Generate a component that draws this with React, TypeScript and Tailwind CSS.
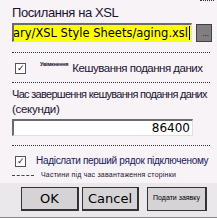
export default function App() {
  const label = { fontFamily: '"Liberation Sans", Arial, sans-serif' };
  const mono = { fontFamily: '"DejaVu Sans", Verdana, sans-serif' };
  return (
    <div className="w-[217px] h-[218px] overflow-hidden bg-[#f7f3f7] text-[#1c1230] relative whitespace-nowrap" style={label}>
      <div className="ml-[200px] w-[14px] border-t border-dotted border-[#333]" />
      <div className="pl-[12px] pr-[5px] pt-[4px]">
        <div className="text-[13px] leading-[16px] tracking-[-0.4px]">Посилання на XSL</div>
        <div className="flex items-center gap-[4px] mt-[2px]">
          <div className="w-[181px] h-[19px] bg-[#ffff00] border-t-2 border-l-2 border-[#6b6b6b] border-b border-r border-b-[#e0e0e0] border-r-[#e0e0e0] overflow-hidden flex justify-end items-center">
            <span className="text-[11.5px] leading-[15px] text-black" style={mono}>
              Library/XSL Style Sheets/aging.xsl
            </span>
            <span className="w-px h-[14px] bg-black shrink-0 mr-[1px] ml-[1px]" />
          </div>
          <div className="w-[16px] h-[18px] bg-[#7f7f7f] border border-[#404040] flex items-end justify-end pr-[2px] pb-[3px]">
            <span className="text-[8px] leading-none text-black">...</span>
          </div>
        </div>
        <div className="mt-[10px] border-t border-dotted border-[#333] w-[198px]" />
        <div className="flex items-center mt-[9px] h-[12px]">
          <div className="w-[11px] h-[11px] ml-[3px] border border-[#555] bg-white flex items-center justify-center text-[9px] leading-none">✓</div>
          <span className="ml-[14px] -mt-[7px] text-[5.5px] leading-none font-bold tracking-[-0.3px]">Увімкнення</span>
          <span className="ml-[4px] text-[11.5px] leading-[14px] tracking-[-0.5px]">Кешування подання даних</span>
        </div>
        <div className="mt-[8px] border-t border-dotted border-[#333] w-[198px]" />
        <div className="mt-[3px] text-[11px] leading-[16px] tracking-[-0.7px]">Час завершення кешування подання даних</div>
        <div className="text-[11.5px] leading-[15px] tracking-[-0.3px]">(секунди)</div>
        <div className="mt-[2px] w-[181px] h-[17px] bg-white border-t-2 border-l-2 border-[#6b6b6b] border-b border-r border-b-[#e0e0e0] border-r-[#e0e0e0] flex items-center justify-end pr-[2px]">
          <span className="text-[12px] leading-[14px] text-black" style={mono}>86400</span>
        </div>
        <div className="mt-[9px] border-t border-dotted border-[#333] w-[198px]" />
        <div className="flex items-center mt-[9px] h-[12px]">
          <div className="w-[11px] h-[11px] ml-[3px] border border-[#555] bg-white flex items-center justify-center text-[9px] leading-none">✓</div>
          <span className="ml-[10px] text-[10px] leading-[14px] tracking-[-0.3px] text-[#15205a]">Надіслати перший рядок підключеному</span>
        </div>
        <div className="flex items-center mt-[3px] h-[10px]">
          <div className="w-[22px] border-t border-dashed border-[#444]" />
          <span className="ml-[7px] text-[7px] leading-[10px] tracking-[0.2px]">Частини під час завантаження сторінки</span>
        </div>
      </div>
      <div className="absolute left-0 right-0 top-[183px] bottom-0 bg-[#ebe8eb] border-b border-[#888]">
        <div className="flex pl-[21px] pt-[4px]">
          <button className="w-[58px] h-[24px] bg-[#d6d3d6] border border-[#333] border-r-2 border-b-2 text-[13px] leading-[16px] text-black" style={mono}>OK</button>
          <button className="ml-[3px] w-[57px] h-[24px] bg-[#d6d3d6] border border-[#333] border-r-2 border-b-2 text-[13px] leading-[16px] text-black" style={mono}>Cancel</button>
          <button className="ml-[8px] w-[60px] h-[24px] bg-[#d6d3d6] border border-[#333] border-r-2 text-[7px] leading-[9px] text-black flex items-start justify-center pt-[5px] overflow-hidden">Подати заявку</button>
        </div>
      </div>
    </div>
  );
}
